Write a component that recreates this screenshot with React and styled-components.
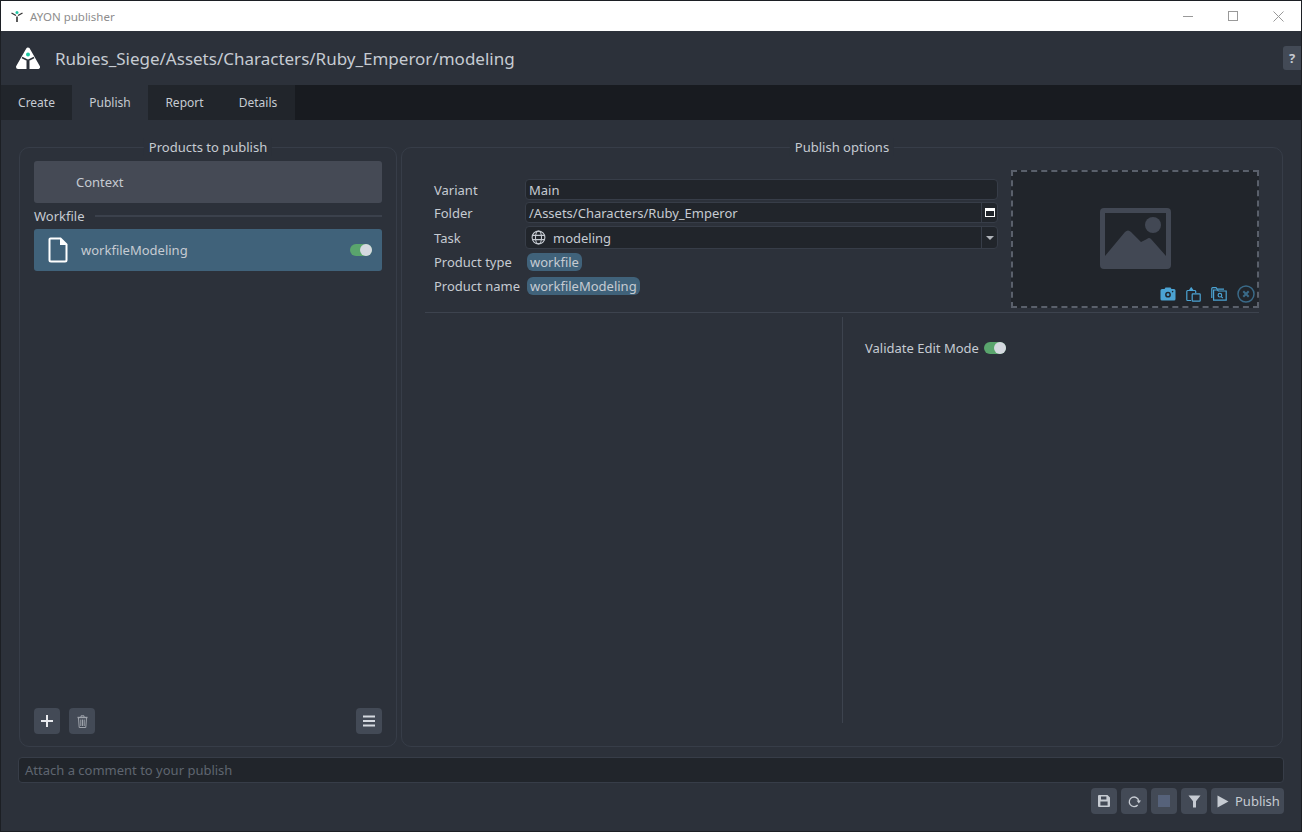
import React from "react";
import styled, { createGlobalStyle } from "styled-components";

const GlobalStyle = createGlobalStyle`
  html, body {
    margin: 0;
    padding: 0;
    background: #1c1f24;
  }
  * {
    box-sizing: border-box;
  }
`;

const Window = styled.div`
  width: 1302px;
  height: 832px;
  display: flex;
  flex-direction: column;
  padding: 1px;
  background: #1c1f24;
  color: #c6cbd2;
  font-family: "Noto Sans", sans-serif;
  font-size: 13px;
  overflow: hidden;
`;

const TitleBar = styled.div`
  height: 30px;
  flex: none;
  background: #fff;
  display: flex;
  align-items: center;
  padding-left: 9px;
  color: #8d8d8d;
  font-size: 11.5px;
`;

const TitleText = styled.span`
  margin-left: 6px;
  flex: 1;
`;

const WinButton = styled.div`
  width: 45px;
  height: 30px;
  display: flex;
  align-items: center;
  justify-content: center;
  &:last-child {
    width: 46px;
  }
`;

const Body = styled.div`
  flex: 1;
  display: flex;
  flex-direction: column;
  background: #2c313a;
  min-height: 0;
`;

const Header = styled.div`
  height: 54px;
  flex: none;
  display: flex;
  align-items: center;
  padding-left: 15px;
  font-size: 17px;
`;

const HeaderTitle = styled.div`
  margin-left: 15px;
  flex: 1;
`;

const HelpTab = styled.div`
  width: 18px;
  height: 24px;
  background: #434a56;
  border-radius: 3px 0 0 3px;
  display: flex;
  align-items: center;
  justify-content: center;
  font-weight: 700;
  font-size: 13px;
`;

const Tabs = styled.div`
  height: 35px;
  flex: none;
  display: flex;
  background: #181b20;
`;

const Tab = styled.div`
  width: ${({ $w }) => $w}px;
  display: flex;
  align-items: center;
  justify-content: center;
  font-size: 12px;
  background: ${({ $active }) => ($active ? "#2c313a" : "#21252b")};
`;

const Content = styled.div`
  flex: 1;
  display: flex;
  flex-direction: column;
  min-height: 0;
  padding: 27px 17px 17px 17px;
`;

const Panels = styled.div`
  height: 600px;
  flex: none;
  display: flex;
  gap: 4px;
  padding: 0 1px;
`;

const Panel = styled.div`
  width: ${({ $w }) => $w}px;
  flex: none;
  position: relative;
  border: 1px solid #373d48;
  border-radius: 10px;
  display: flex;
  flex-direction: column;
`;

const PanelTitle = styled.div`
  position: absolute;
  top: -10px;
  left: 50%;
  transform: translateX(-50%);
  background: #2c313a;
  padding: 0 5px;
  line-height: 18px;
  white-space: nowrap;
`;

const ProductList = styled.div`
  flex: 1;
  display: flex;
  flex-direction: column;
  padding: 13px 14px 12px 14px;
`;

const ContextCard = styled.div`
  height: 42px;
  flex: none;
  background: #454a55;
  border-radius: 3px;
  display: flex;
  align-items: center;
  padding-left: 42px;
`;

const GroupRow = styled.div`
  height: 26px;
  flex: none;
  display: flex;
  align-items: center;
  gap: 10px;
`;

const GroupLine = styled.div`
  flex: 1;
  height: 2px;
  margin-top: -1px;
  background: #3b414c;
`;

const ProductCard = styled.div`
  height: 42px;
  flex: none;
  background: #40627a;
  border-radius: 3px;
  display: flex;
  align-items: center;
  padding: 0 10px 0 14px;
`;

const ProductName = styled.div`
  margin-left: 13px;
  flex: 1;
`;

const Toggle = styled.div`
  width: 22px;
  height: 12px;
  border-radius: 6px;
  background: #5aa56d;
  position: relative;
  flex: none;
  &::after {
    content: "";
    position: absolute;
    right: 0;
    top: 0;
    width: 12px;
    height: 12px;
    border-radius: 50%;
    background: #d5d9e0;
  }
`;

const ListFooter = styled.div`
  margin-top: auto;
  display: flex;
  gap: 9px;
`;

const IconButton = styled.div`
  width: 26px;
  height: 26px;
  flex: none;
  background: #434a56;
  border-radius: 4px;
  display: flex;
  align-items: center;
  justify-content: center;
  margin-left: ${({ $push }) => ($push ? "auto" : "0")};
`;

const OptionsTop = styled.div`
  display: flex;
  height: 165px;
  flex: none;
  margin: 0 23px;
  border-bottom: 1px solid #3d434e;
  padding-bottom: 4px;
  gap: 13px;
`;

const Form = styled.div`
  flex: 1;
  padding: 31px 0 0 9px;
  display: grid;
  grid-template-columns: 91px 1fr;
  grid-auto-rows: min-content;
`;

const Label = styled.div`
  height: ${({ $h }) => $h}px;
  display: flex;
  align-items: center;
`;

const Field = styled.div`
  height: ${({ $h }) => $h}px;
  margin-bottom: ${({ $mb }) => $mb}px;
  background: #21252b;
  border: 1px solid #373d48;
  border-radius: 4px;
  display: flex;
  align-items: center;
  padding-left: 3px;
`;

const FieldValue = styled.div`
  flex: 1;
  display: flex;
  align-items: center;
`;

const GlobeSlot = styled.div`
  display: flex;
  margin: 0 7px 0 2px;
`;

const FieldAddon = styled.div`
  width: 16px;
  height: 100%;
  flex: none;
  border-left: 1px solid #373d48;
  display: flex;
  align-items: center;
  justify-content: center;
`;

const ChipCell = styled.div`
  height: ${({ $h }) => $h}px;
  display: flex;
  align-items: center;
  padding-left: 2px;
`;

const Chip = styled.div`
  height: 18px;
  line-height: 18px;
  padding: 0 3px;
  border-radius: 6px;
  background: #40627a;
`;

const Thumbnail = styled.div`
  width: 248px;
  height: 138px;
  flex: none;
  align-self: flex-end;
  background: #21252b;
  border: 2px dashed #5a606b;
  position: relative;
  display: flex;
  align-items: center;
  justify-content: center;
  padding-bottom: 2px;
`;

const ThumbActions = styled.div`
  position: absolute;
  right: 2px;
  bottom: 3px;
  display: flex;
  align-items: center;
  gap: 10px;
`;

const OptionsBottom = styled.div`
  flex: 1;
  display: flex;
  padding: 4px 23px 23px 23px;
`;

const OptionColumn = styled.div`
  flex: none;
  width: 418px;
  border-right: 1px solid #3d434e;
`;

const AttrRow = styled.div`
  display: flex;
  align-items: center;
  gap: 5px;
  margin: 21px 0 0 22px;
  height: 20px;
`;

const CommentInput = styled.div`
  height: 26px;
  flex: none;
  margin-top: 10px;
  background: #21252b;
  border: 1px solid #373d48;
  border-radius: 4px;
  display: flex;
  align-items: center;
  padding-left: 6px;
  color: #5f6570;
`;

const Footer = styled.div`
  display: flex;
  justify-content: flex-end;
  gap: 4px;
  margin-top: 5px;
`;

const PublishButton = styled.div`
  height: 26px;
  width: 73px;
  flex: none;
  background: #434a56;
  border-radius: 4px;
  display: flex;
  align-items: center;
  padding-left: 6px;
  gap: 6px;
`;

const StopSquare = styled.div`
  width: 12px;
  height: 12px;
  background: #56627a;
`;

const SmallLogo = () => (
  <svg width="14" height="14" viewBox="0 0 14 14">
    <path d="M1.5 4 L6 6.5 M12.5 4 L8 6.5" stroke="#333" strokeWidth="1.3" />
    <path d="M7 7.5 V13" stroke="#333" strokeWidth="1.6" />
    <circle cx="7" cy="3.5" r="1.5" fill="#1fc7a3" />
  </svg>
);

const Logo = () => (
  <svg width="24" height="23" viewBox="0 0 24 23">
    <path
      d="M12 2.5 L22 20 H2 Z"
      fill="#fff"
      stroke="#fff"
      strokeWidth="4"
      strokeLinejoin="round"
    />
    <path d="M12 14 V23" stroke="#2c313a" strokeWidth="3" />
    <path d="M12 13.5 L6 10.5 M12 13.5 L18 10.5" stroke="#2c313a" strokeWidth="1.6" />
    <circle cx="12" cy="7.5" r="2" fill="#1fc7a3" />
  </svg>
);

const FileIcon = () => (
  <svg width="20" height="26" viewBox="0 0 20 26" fill="none">
    <path
      d="M2.5 1.5 H12.5 L18.5 7.5 V23 A1.5 1.5 0 0 1 17 24.5 H3 A1.5 1.5 0 0 1 1.5 23 V2.5 A1 1 0 0 1 2.5 1.5 Z"
      stroke="#fff"
      strokeWidth="2"
    />
    <path d="M12 1.5 V8 H18.5" fill="#fff" />
  </svg>
);

const Globe = () => (
  <svg width="15" height="15" viewBox="0 0 15 15" fill="none" stroke="#c6cbd2" strokeWidth="1.1">
    <circle cx="7.5" cy="7.5" r="6.4" />
    <ellipse cx="7.5" cy="7.5" rx="3" ry="6.4" />
    <path d="M1.4 5.4 H13.6 M1.4 9.6 H13.6" />
  </svg>
);

const ImagePlaceholder = () => (
  <svg width="71" height="61" viewBox="0 0 71 61">
    <path
      fillRule="evenodd"
      d="M4 0 H67 A4 4 0 0 1 71 4 V57 A4 4 0 0 1 67 61 H4 A4 4 0 0 1 0 57 V4 A4 4 0 0 1 4 0 Z M5 5 V48 L25 24 Q28 21 31 24 L41 34 L47 31 Q49 29 51 31 L66 48 V5 Z"
      fill="#424854"
    />
    <circle cx="53" cy="17" r="8" fill="#424854" />
  </svg>
);

const CameraIcon = () => (
  <svg width="16" height="14" viewBox="0 0 16 14">
    <path
      fillRule="evenodd"
      d="M2 2 H4.5 L5.5 0.5 H10.5 L11.5 2 H14 A1.5 1.5 0 0 1 15.5 3.5 V12 A1.5 1.5 0 0 1 14 13.5 H2 A1.5 1.5 0 0 1 0.5 12 V3.5 A1.5 1.5 0 0 1 2 2 Z M8 4.8 A2.9 2.9 0 1 0 8 10.6 A2.9 2.9 0 1 0 8 4.8 Z"
      fill="#4ba3d3"
    />
    <circle cx="8" cy="7.7" r="1.4" fill="#4ba3d3" />
    <circle cx="12.6" cy="4.6" r="0.8" fill="#21252b" />
  </svg>
);

const PasteIcon = () => (
  <svg width="15" height="15" viewBox="0 0 15 15" fill="none" stroke="#4ba3d3" strokeWidth="1.2">
    <path d="M5 13.5 H1.5 A1 1 0 0 1 0.8 12.8 V4.3 A1 1 0 0 1 1.5 3.5 H9 A1 1 0 0 1 9.7 4.3 V6" />
    <path d="M3.5 3.3 L5.2 0.9 L7 3.3" fill="#4ba3d3" />
    <rect x="6.2" y="6.8" width="8" height="7.4" rx="0.6" />
  </svg>
);

const FolderSearchIcon = () => (
  <svg width="16" height="14" viewBox="0 0 16 14" fill="none" stroke="#4ba3d3" strokeWidth="1.2">
    <path d="M0.8 11 V1.5 A0.8 0.8 0 0 1 1.6 0.7 H5 L6.2 2.2 H13" />
    <path d="M2.6 3 H6.4 L7.4 4 H15.2 V13.2 H2.6 Z" />
    <circle cx="8.9" cy="8.2" r="1.8" />
    <path d="M10.2 9.6 L11.8 11" />
  </svg>
);

const ClearIcon = () => (
  <svg width="18" height="18" viewBox="0 0 18 18" fill="none" stroke="#3a6a88" strokeWidth="1.5">
    <circle cx="9" cy="9" r="8" />
    <path d="M6.3 6.3 L11.7 11.7 M11.7 6.3 L6.3 11.7" strokeWidth="2" />
  </svg>
);

const PlusIcon = () => (
  <svg width="12" height="12" viewBox="0 0 12 12">
    <path d="M6 0 V12 M0 6 H12" stroke="#e8eaee" strokeWidth="2" />
  </svg>
);

const TrashIcon = () => (
  <svg width="11" height="13" viewBox="0 0 11 13" fill="none" stroke="#9ea3ab" strokeWidth="1">
    <path d="M0.5 2.5 H10.5" strokeWidth="1.4" />
    <path d="M4 2 V0.8 H7 V2" />
    <path d="M1.5 3 L2.2 12.5 H8.8 L9.5 3" />
    <path d="M3.8 4.5 V11 M5.5 4.5 V11 M7.2 4.5 V11" />
  </svg>
);

const MenuIcon = () => (
  <svg width="12" height="12" viewBox="0 0 12 12">
    <path d="M0 1.5 H12 M0 6 H12 M0 10.5 H12" stroke="#d5d9e0" strokeWidth="2" />
  </svg>
);

const SaveIcon = () => (
  <svg width="12" height="12" viewBox="0 0 12 12" fill="none">
    <path
      fillRule="evenodd"
      d="M1 0 H9.5 L12 2.5 V11 A1 1 0 0 1 11 12 H1 A1 1 0 0 1 0 11 V1 A1 1 0 0 1 1 0 Z M3 1.4 V4.4 H8.4 V1.4 Z M2.4 6.6 V10.6 H9.6 V6.6 Z"
      fill="#c6cbd2"
    />
  </svg>
);

const RefreshIcon = () => (
  <svg width="13" height="13" viewBox="0 0 13 13" fill="none">
    <path d="M9.7 10 A4.8 4.8 0 1 1 10.8 6" stroke="#c6cbd2" strokeWidth="1.3" />
    <path d="M8.6 5.4 H13 L10.8 8.6 Z" fill="#c6cbd2" />
  </svg>
);

const FilterIcon = () => (
  <svg width="13" height="13" viewBox="0 0 13 13">
    <path d="M0.5 0.5 H12.5 L8 6.2 V12.5 H5 V6.2 Z" fill="#c6cbd2" />
  </svg>
);

const PlayIcon = () => (
  <svg width="12" height="13" viewBox="0 0 12 13">
    <path d="M0.5 0.5 L11.5 6.5 L0.5 12.5 Z" fill="#c6cbd2" />
  </svg>
);

const App = () => {
  return (
    <Window>
      <GlobalStyle />
      <TitleBar>
        <SmallLogo />
        <TitleText>AYON publisher</TitleText>
        <WinButton>
          <svg width="10" height="11" viewBox="0 0 10 11">
            <path d="M0 5.5 H10" stroke="#999" />
          </svg>
        </WinButton>
        <WinButton>
          <svg width="10" height="10" viewBox="0 0 10 10" fill="none">
            <rect x="0.5" y="0.5" width="9" height="9" stroke="#999" />
          </svg>
        </WinButton>
        <WinButton>
          <svg width="11" height="11" viewBox="0 0 11 11">
            <path d="M0.5 0.5 L10.5 10.5 M10.5 0.5 L0.5 10.5" stroke="#999" />
          </svg>
        </WinButton>
      </TitleBar>
      <Body>
        <Header>
          <Logo />
          <HeaderTitle>Rubies_Siege/Assets/Characters/Ruby_Emperor/modeling</HeaderTitle>
          <HelpTab>?</HelpTab>
        </Header>
        <Tabs>
          <Tab $w={71}>Create</Tab>
          <Tab $w={76} $active>Publish</Tab>
          <Tab $w={73}>Report</Tab>
          <Tab $w={74}>Details</Tab>
        </Tabs>
        <Content>
          <Panels>
            <Panel $w={378}>
              <PanelTitle>Products to publish</PanelTitle>
              <ProductList>
                <ContextCard>Context</ContextCard>
                <GroupRow>
                  Workfile
                  <GroupLine />
                </GroupRow>
                <ProductCard>
                  <FileIcon />
                  <ProductName>workfileModeling</ProductName>
                  <Toggle />
                </ProductCard>
                <ListFooter>
                  <IconButton><PlusIcon /></IconButton>
                  <IconButton><TrashIcon /></IconButton>
                  <IconButton $push><MenuIcon /></IconButton>
                </ListFooter>
              </ProductList>
            </Panel>
            <Panel $w={882}>
              <PanelTitle>Publish options</PanelTitle>
              <OptionsTop>
                <Form>
                  <Label $h={21}>Variant</Label>
                  <Field $h={21} $mb={2}><FieldValue>Main</FieldValue></Field>
                  <Label $h={21}>Folder</Label>
                  <Field $h={21} $mb={3}>
                    <FieldValue>/Assets/Characters/Ruby_Emperor</FieldValue>
                    <FieldAddon>
                      <svg width="10" height="9" viewBox="0 0 10 9">
                        <path fillRule="evenodd" d="M0 0 H10 V9 H0 Z M1 3 V8 H9 V3 Z" fill="#fff" />
                      </svg>
                    </FieldAddon>
                  </Field>
                  <Label $h={23}>Task</Label>
                  <Field $h={23} $mb={0}>
                    <FieldValue>
                      <GlobeSlot><Globe /></GlobeSlot>
                      <span>modeling</span>
                    </FieldValue>
                    <FieldAddon>
                      <svg width="8" height="4" viewBox="0 0 8 4">
                        <path d="M0 0 H8 L4 4 Z" fill="#b0b4ba" />
                      </svg>
                    </FieldAddon>
                  </Field>
                  <Label $h={26}>Product type</Label>
                  <ChipCell $h={26}><Chip>workfile</Chip></ChipCell>
                  <Label $h={22}>Product name</Label>
                  <ChipCell $h={22}><Chip>workfileModeling</Chip></ChipCell>
                </Form>
                <Thumbnail>
                  <ImagePlaceholder />
                  <ThumbActions>
                    <CameraIcon />
                    <PasteIcon />
                    <FolderSearchIcon />
                    <ClearIcon />
                  </ThumbActions>
                </Thumbnail>
              </OptionsTop>
              <OptionsBottom>
                <OptionColumn />
                <AttrRow>
                  Validate Edit Mode
                  <Toggle />
                </AttrRow>
              </OptionsBottom>
            </Panel>
          </Panels>
          <CommentInput>Attach a comment to your publish</CommentInput>
          <Footer>
            <IconButton><SaveIcon /></IconButton>
            <IconButton><RefreshIcon /></IconButton>
            <IconButton><StopSquare /></IconButton>
            <IconButton><FilterIcon /></IconButton>
            <PublishButton>
              <PlayIcon />
              Publish
            </PublishButton>
          </Footer>
        </Content>
      </Body>
    </Window>
  );
};

export default App;
